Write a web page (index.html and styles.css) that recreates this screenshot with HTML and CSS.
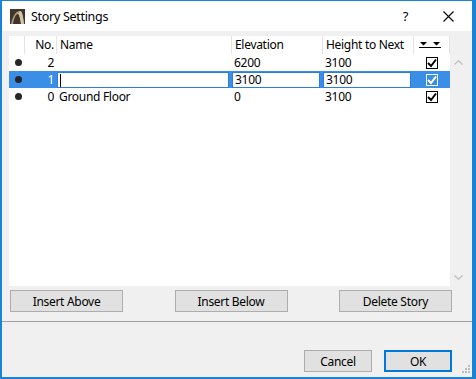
FILE: index.html
```html
<!DOCTYPE html>
<html lang="en">
<head>
    <meta charset="UTF-8">
    <title>Story Settings</title>
    <link rel="stylesheet" href="styles.css">
</head>
<body>

    <div class="window">

        <!-- Title Bar -->
        <div class="titlebar">
            <svg class="app-icon" width="15" height="15" viewBox="0 0 15 15">
                <rect width="15" height="15" fill="#3f3528"/>
                <path d="M1 15 C3 6 6 2 10 2 C12 2 13 6 14 15 L11 15 C10 8 9 5 8 5 C6 5 4 9 3 15 Z" fill="#a89a7c"/>
                <path d="M8 5 C9 5 10 8 11 15 L14 15 C13 6 12 2 10 2 Z" fill="#d2c5a8"/>
            </svg>
            <span class="title">Story Settings</span>
            <span class="help">?</span>
            <svg class="close" width="11" height="11" viewBox="0 0 11 11">
                <path d="M0.5 0.5 L10.5 10.5 M10.5 0.5 L0.5 10.5" stroke="#000" stroke-width="1.1"/>
            </svg>
        </div>

        <div class="content">

            <!-- Story List -->
            <div class="list-wrap">
                <div class="story-table">
                    <div class="row header-row">
                        <div class="cell"></div>
                        <div class="cell num">No.</div>
                        <div class="cell">Name</div>
                        <div class="cell">Elevation</div>
                        <div class="cell">Height to Next</div>
                        <div class="cell check-col">
                            <svg width="26" height="6" viewBox="0 0 26 6">
                                <path d="M1 0 L8 0 L4.5 3.5 Z M14 0 L21 0 L17.5 3.5 Z" fill="#000"/>
                                <rect x="0" y="5" width="22" height="1" fill="#000"/>
                            </svg>
                        </div>
                    </div>

                    <div class="row">
                        <div class="cell dot-cell"><span class="dot"></span></div>
                        <div class="cell num">2</div>
                        <div class="cell"></div>
                        <div class="cell">6200</div>
                        <div class="cell">3100</div>
                        <div class="cell check-col"><span class="checkbox"><svg width="10" height="10" viewBox="0 0 10 10"><path d="M1 5 L4 8 L9 1.5" fill="none" stroke="#000" stroke-width="2"/></svg></span></div>
                    </div>

                    <div class="row selected">
                        <div class="cell dot-cell"><span class="dot"></span></div>
                        <div class="cell num">1</div>
                        <div class="cell"><span class="edit"><span class="caret"></span></span></div>
                        <div class="cell"><span class="edit">3100</span></div>
                        <div class="cell"><span class="edit">3100</span></div>
                        <div class="cell check-col"><span class="checkbox"><svg width="10" height="10" viewBox="0 0 10 10"><path d="M1 5 L4 8 L9 1.5" fill="none" stroke="#fff" stroke-width="2"/></svg></span></div>
                    </div>

                    <div class="row">
                        <div class="cell dot-cell"><span class="dot"></span></div>
                        <div class="cell num">0</div>
                        <div class="cell">Ground Floor</div>
                        <div class="cell">0</div>
                        <div class="cell">3100</div>
                        <div class="cell check-col"><span class="checkbox"><svg width="10" height="10" viewBox="0 0 10 10"><path d="M1 5 L4 8 L9 1.5" fill="none" stroke="#000" stroke-width="2"/></svg></span></div>
                    </div>
                </div>

                <div class="scrollbar">
                    <svg width="9" height="5" viewBox="0 0 9 5"><path d="M0.5 4.5 L4.5 0.8 L8.5 4.5" fill="none" stroke="#c2c2c2" stroke-width="1.4"/></svg>
                    <svg width="9" height="5" viewBox="0 0 9 5"><path d="M0.5 0.5 L4.5 4.2 L8.5 0.5" fill="none" stroke="#c2c2c2" stroke-width="1.4"/></svg>
                </div>
            </div>

            <div class="list-actions">
                <button class="btn">Insert Above</button>
                <button class="btn">Insert Below</button>
                <button class="btn">Delete Story</button>
            </div>
        </div>

        <div class="divider"></div>

        <!-- Dialog Buttons -->
        <div class="footer">
            <button class="btn">Cancel</button>
            <button class="btn default">OK</button>
        </div>

        <svg class="grip" width="8" height="8" viewBox="0 0 8 8">
            <rect x="6" y="0" width="2" height="2" fill="#bdbdbd"/>
            <rect x="3" y="3" width="2" height="2" fill="#bdbdbd"/>
            <rect x="6" y="3" width="2" height="2" fill="#bdbdbd"/>
            <rect x="0" y="6" width="2" height="2" fill="#bdbdbd"/>
            <rect x="3" y="6" width="2" height="2" fill="#bdbdbd"/>
            <rect x="6" y="6" width="2" height="2" fill="#bdbdbd"/>
        </svg>
    </div>

</body>
</html>
```

FILE: styles.css
```css
* {
    box-sizing: border-box;
}
body {
    margin: 0;
    font-family: 'Noto Sans', sans-serif;
    font-size: 12px;
    letter-spacing: -0.3px;
    color: #000;
}
.window {
    position: relative;
    width: 476px;
    height: 379px;
    display: flex;
    flex-direction: column;
    background-color: #f0f0f0;
    border-style: solid;
    border-color: #1883d7;
    border-width: 1px 4px 2px 2px;
}
.titlebar {
    height: 30px;
    background-color: #fff;
    display: flex;
    align-items: center;
    padding-left: 8px;
}
.app-icon {
    margin-top: 1px;
}
.title {
    margin-left: 6px;
    font-size: 12.5px;
}
.help {
    margin-left: auto;
    font-size: 13px;
    margin-right: 35px;
}
.close {
    margin-right: 18px;
}
.content {
    padding: 5px 5px 0 7px;
}
.list-wrap {
    display: flex;
    height: 250px;
}
.story-table {
    width: 441px;
    background-color: #fff;
}
.scrollbar {
    width: 17px;
    padding: 24px 0 6px 0;
    display: flex;
    flex-direction: column;
    justify-content: space-between;
    align-items: center;
}
.row {
    display: grid;
    grid-template-columns: 15px 32px 175px 91px 91px 37px;
    height: 17px;
    line-height: 17px;
}
.header-row {
    height: 18px;
    line-height: 18px;
}
.header-row .cell + .cell {
    border-left: 1px solid #e3e3e3;
}
.header-row .check-col {
    border-right: 1px solid #e3e3e3;
}
.cell {
    padding-left: 3px;
    white-space: nowrap;
    overflow: hidden;
}
.cell.num {
    padding-left: 0;
    padding-right: 2px;
    text-align: right;
}
.dot-cell {
    display: flex;
    align-items: center;
    justify-content: flex-end;
    padding-left: 0;
    padding-right: 2px;
}
.dot {
    flex-shrink: 0;
    width: 7px;
    height: 7px;
    border-radius: 50%;
    background-color: #262626;
}
.check-col {
    display: flex;
    align-items: center;
    justify-content: center;
    padding-left: 0;
}
.checkbox {
    width: 12px;
    height: 12px;
    border: 1px solid #000;
    display: flex;
    align-items: center;
    justify-content: center;
}
.selected {
    background-color: #3a8ee6;
}
.selected .num {
    color: #fff;
}
.selected .cell:nth-child(3),
.selected .cell:nth-child(4),
.selected .cell:nth-child(5) {
    padding: 1px 2px 0 1px;
}
.edit {
    display: flex;
    align-items: center;
    height: 16px;
    line-height: 14px;
    background-color: #fff;
    border: 1px solid #2a7fdc;
    padding-left: 2px;
}
.caret {
    width: 1px;
    height: 13px;
    background-color: #000;
}
.selected .checkbox {
    border-color: #fff;
}
.list-actions {
    display: flex;
    justify-content: space-between;
    padding: 4px 15px 0 1px;
}
.btn {
    font-family: 'Noto Sans', sans-serif;
    font-size: 12px;
    letter-spacing: -0.3px;
    color: #000;
    width: 113px;
    height: 22px;
    padding: 0;
    background-color: #e1e1e1;
    border: 1px solid #adadad;
}
.divider {
    margin-top: 9px;
    height: 1px;
    background-color: #a0a0a0;
}
.footer {
    display: flex;
    justify-content: flex-end;
    gap: 12px;
    padding: 28px 20px 0 0;
}
.footer .btn {
    width: 68px;
}
.btn.default {
    border: 2px solid #0078d7;
}
.grip {
    position: absolute;
    right: 2px;
    bottom: 4px;
}
```
